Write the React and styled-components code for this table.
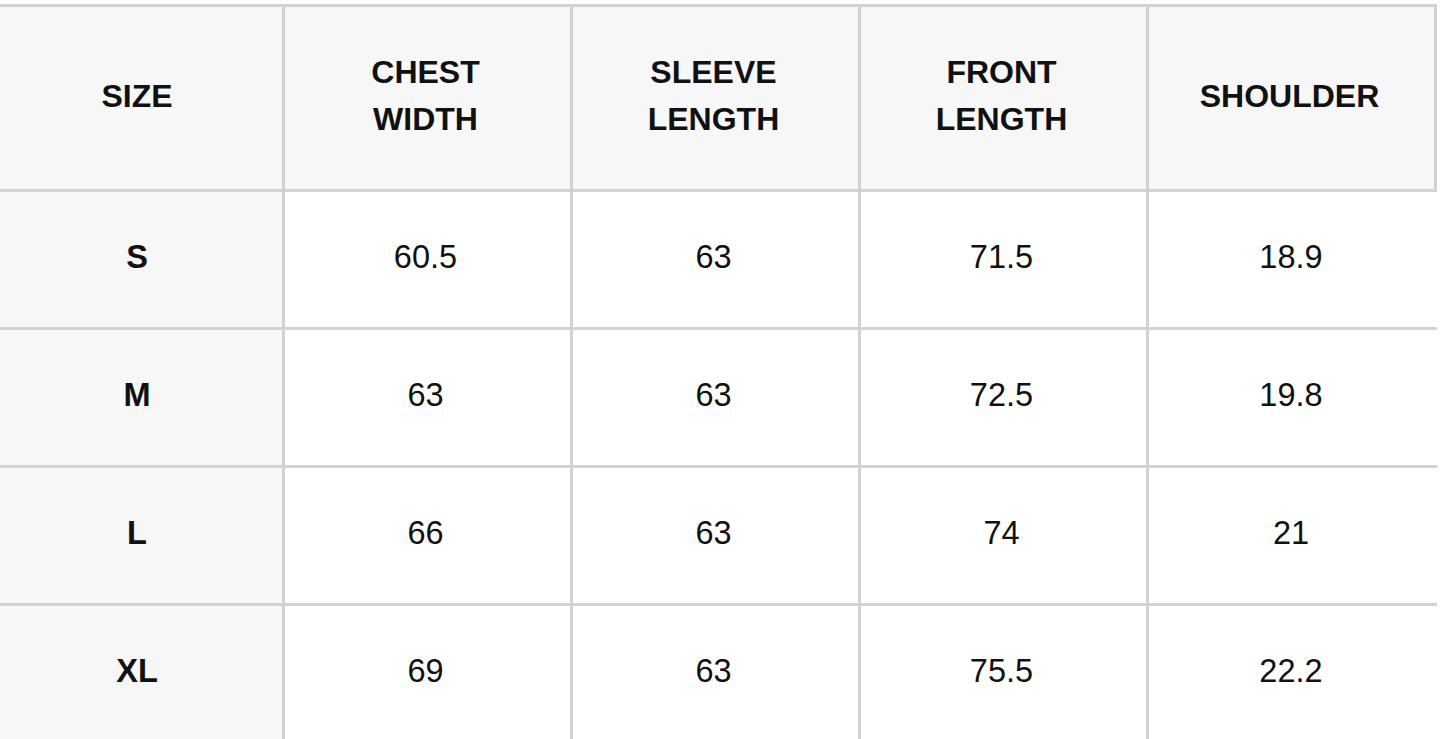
import React from "react";
import styled, { createGlobalStyle } from "styled-components";

const GlobalStyle = createGlobalStyle`
  html, body {
    margin: 0;
    padding: 0;
    background: #ffffff;
    overflow: hidden;
  }
  body {
    font-family: "Liberation Sans", Arial, Helvetica, sans-serif;
    color: #111111;
  }
`;

const Page = styled.div`
  padding-top: 4px;
  width: 1445px;
  height: 739px;
  overflow: hidden;
`;

const Table = styled.table`
  border-collapse: separate;
  border-spacing: 0;
  table-layout: fixed;
  width: 1437px;
`;

const Col = styled.col`
  width: ${(props) => (props.first ? "285px" : "288px")};
`;

const HeadCell = styled.th`
  background-color: #f7f7f7;
  border-top: 3px solid #d2d2d2;
  border-right: 3px solid #d2d2d2;
  border-bottom: 3px solid #d2d2d2;
  height: 178px;
  padding: ${(props) => (props.label ? "0 8px 4px 0" : "0 12px 4px 8px")};
  font-size: 32px;
  line-height: 47px;
  font-weight: 700;
  text-align: center;
  vertical-align: middle;
  text-transform: uppercase;
`;

const Cell = styled.td`
  background-color: ${(props) => (props.label ? "#f7f7f7" : "#ffffff")};
  border-right: ${(props) => (props.last ? "none" : "3px solid #d2d2d2")};
  border-bottom: 3px solid #d2d2d2;
  height: 131px;
  padding: ${(props) => (props.label ? "0 8px 4px 0" : "0 12px 4px 8px")};
  font-size: 32.5px;
  font-weight: ${(props) => (props.label ? 700 : 400)};
  text-align: center;
  vertical-align: middle;
`;

const headers = [
  ["SIZE"],
  ["CHEST", "WIDTH"],
  ["SLEEVE", "LENGTH"],
  ["FRONT", "LENGTH"],
  ["SHOULDER"],
];

const rows = [
  ["S", "60.5", "63", "71.5", "18.9"],
  ["M", "63", "63", "72.5", "19.8"],
  ["L", "66", "63", "74", "21"],
  ["XL", "69", "63", "75.5", "22.2"],
];

const App = () => {
  return (
    <Page>
      <GlobalStyle />
      <Table>
        <colgroup>
          <Col first />
          <Col />
          <Col />
          <Col />
          <Col />
        </colgroup>
        <thead>
          <tr>
            {headers.map((lines, i) => (
              <HeadCell key={i} label={i === 0}>
                {lines.map((line, j) => (
                  <React.Fragment key={j}>
                    {j > 0 && <br />}
                    {line}
                  </React.Fragment>
                ))}
              </HeadCell>
            ))}
          </tr>
        </thead>
        <tbody>
          {rows.map((row) => (
            <tr key={row[0]}>
              {row.map((value, i) => (
                <Cell key={i} label={i === 0} last={i === row.length - 1}>
                  {value}
                </Cell>
              ))}
            </tr>
          ))}
        </tbody>
      </Table>
    </Page>
  );
};

export default App;
